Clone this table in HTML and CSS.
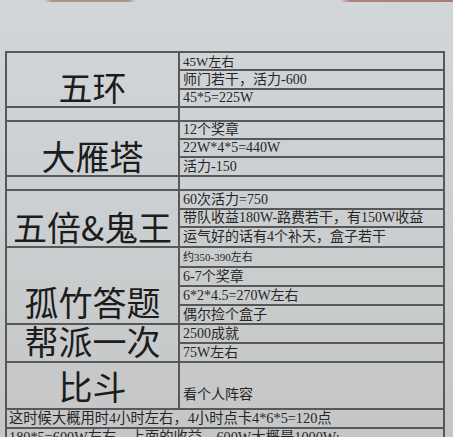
FILE: index.html
```html
<!DOCTYPE html>
<html lang="zh">
<head>
<meta charset="utf-8">
<title>日常收益表</title>
<link rel="stylesheet" href="styles.css">
</head>
<body>
<div class="edge"></div>
<div class="sheet">
  <div class="grid">
    <div class="l s3"><span>五环</span></div>
    <div class="r sm">45W左右</div>
    <div class="r">师门若干，活力-600</div>
    <div class="r">45*5=225W</div>

    <div class="l"></div>
    <div class="r"></div>

    <div class="l s3"><span>大雁塔</span></div>
    <div class="r">12个奖章</div>
    <div class="r">22W*4*5=440W</div>
    <div class="r">活力-150</div>

    <div class="l"></div>
    <div class="r"></div>

    <div class="l s3"><span>五倍&amp;鬼王</span></div>
    <div class="r">60次活力=750</div>
    <div class="r">带队收益180W-路费若干，有150W收益</div>
    <div class="r">运气好的话有4个补天，盒子若干</div>

    <div class="l s4 up"><span>孤竹答题</span></div>
    <div class="r xs">约350-390左右</div>
    <div class="r">6-7个奖章</div>
    <div class="r">6*2*4.5=270W左右</div>
    <div class="r">偶尔捡个盒子</div>

    <div class="l s2 tight"><span>帮派一次</span></div>
    <div class="r">2500成就</div>
    <div class="r">75W左右</div>

    <div class="l mid"><span>比斗</span></div>
    <div class="r low">看个人阵容</div>

    <div class="f">这时候大概用时4小时左右，4小时点卡4*6*5=120点</div>
    <div class="f">180*5=600W左右，上面的收益，600W大概是1000W;</div>
  </div>
</div>
</body>
</html>
```

FILE: styles.css
```css
html, body {
  margin: 0;
  padding: 0;
}
body {
  width: 453px;
  height: 437px;
  overflow: hidden;
  background: linear-gradient(to bottom, #d3d6d9 0%, #cdd0d2 40%, #c4c6c7 100%);
  font-family: "Liberation Serif", "Noto Sans CJK SC", serif;
  color: #262626;
}
.edge {
  height: 2px;
  background: linear-gradient(to right,
    transparent 0, transparent 44px, #a57a70 52px, #a57a70 128px, transparent 136px,
    transparent 340px, #a2675e 350px, #9a5f57 453px);
  opacity: 0.75;
}
.sheet {
  padding: 49px 8px 0 5px;
}
.grid {
  display: grid;
  grid-template-columns: 173px 1fr;
  grid-template-rows: 18px 19px 18px 14px 18px 18px 19px 14px 19px 18px 20px 20px 19px 19px 19px 19px 19px 47px 19px 19px;
  border-top: 2px solid #585858;
  border-right: 2px solid #585858;
  border-left: 2px solid #585858;
}
.grid > div {
  box-sizing: border-box;
  border-bottom: 2px solid #585858;
  white-space: nowrap;
}
.l {
  border-right: 2px solid #585858;
  display: flex;
  justify-content: center;
  align-items: flex-end;
  padding-bottom: 3px;
  font-family: "Noto Sans CJK SC", sans-serif;
  font-size: 34px;
  line-height: 34px;
  color: #1c1c1c;
}
.l span {
  display: block;
  height: 32px;
  line-height: 32px;
}
.up { padding-bottom: 5px; }
.tight { padding-bottom: 4px; }
.s2 { grid-row: span 2; }
.s3 { grid-row: span 3; }
.s4 { grid-row: span 4; }
.mid { align-items: center; padding-bottom: 0; }
.r {
  display: flex;
  align-items: center;
  padding-left: 3px;
  font-size: 14px;
  line-height: 1;
  overflow: hidden;
}
.r.sm { font-size: 13px; }
.r.xs { font-size: 11px; }
.r.low { align-items: flex-end; padding-bottom: 6px; }
.f {
  grid-column: 1 / -1;
  display: flex;
  align-items: center;
  padding-left: 2px;
  font-size: 14.3px;
  line-height: 1;
  overflow: hidden;
}
```
